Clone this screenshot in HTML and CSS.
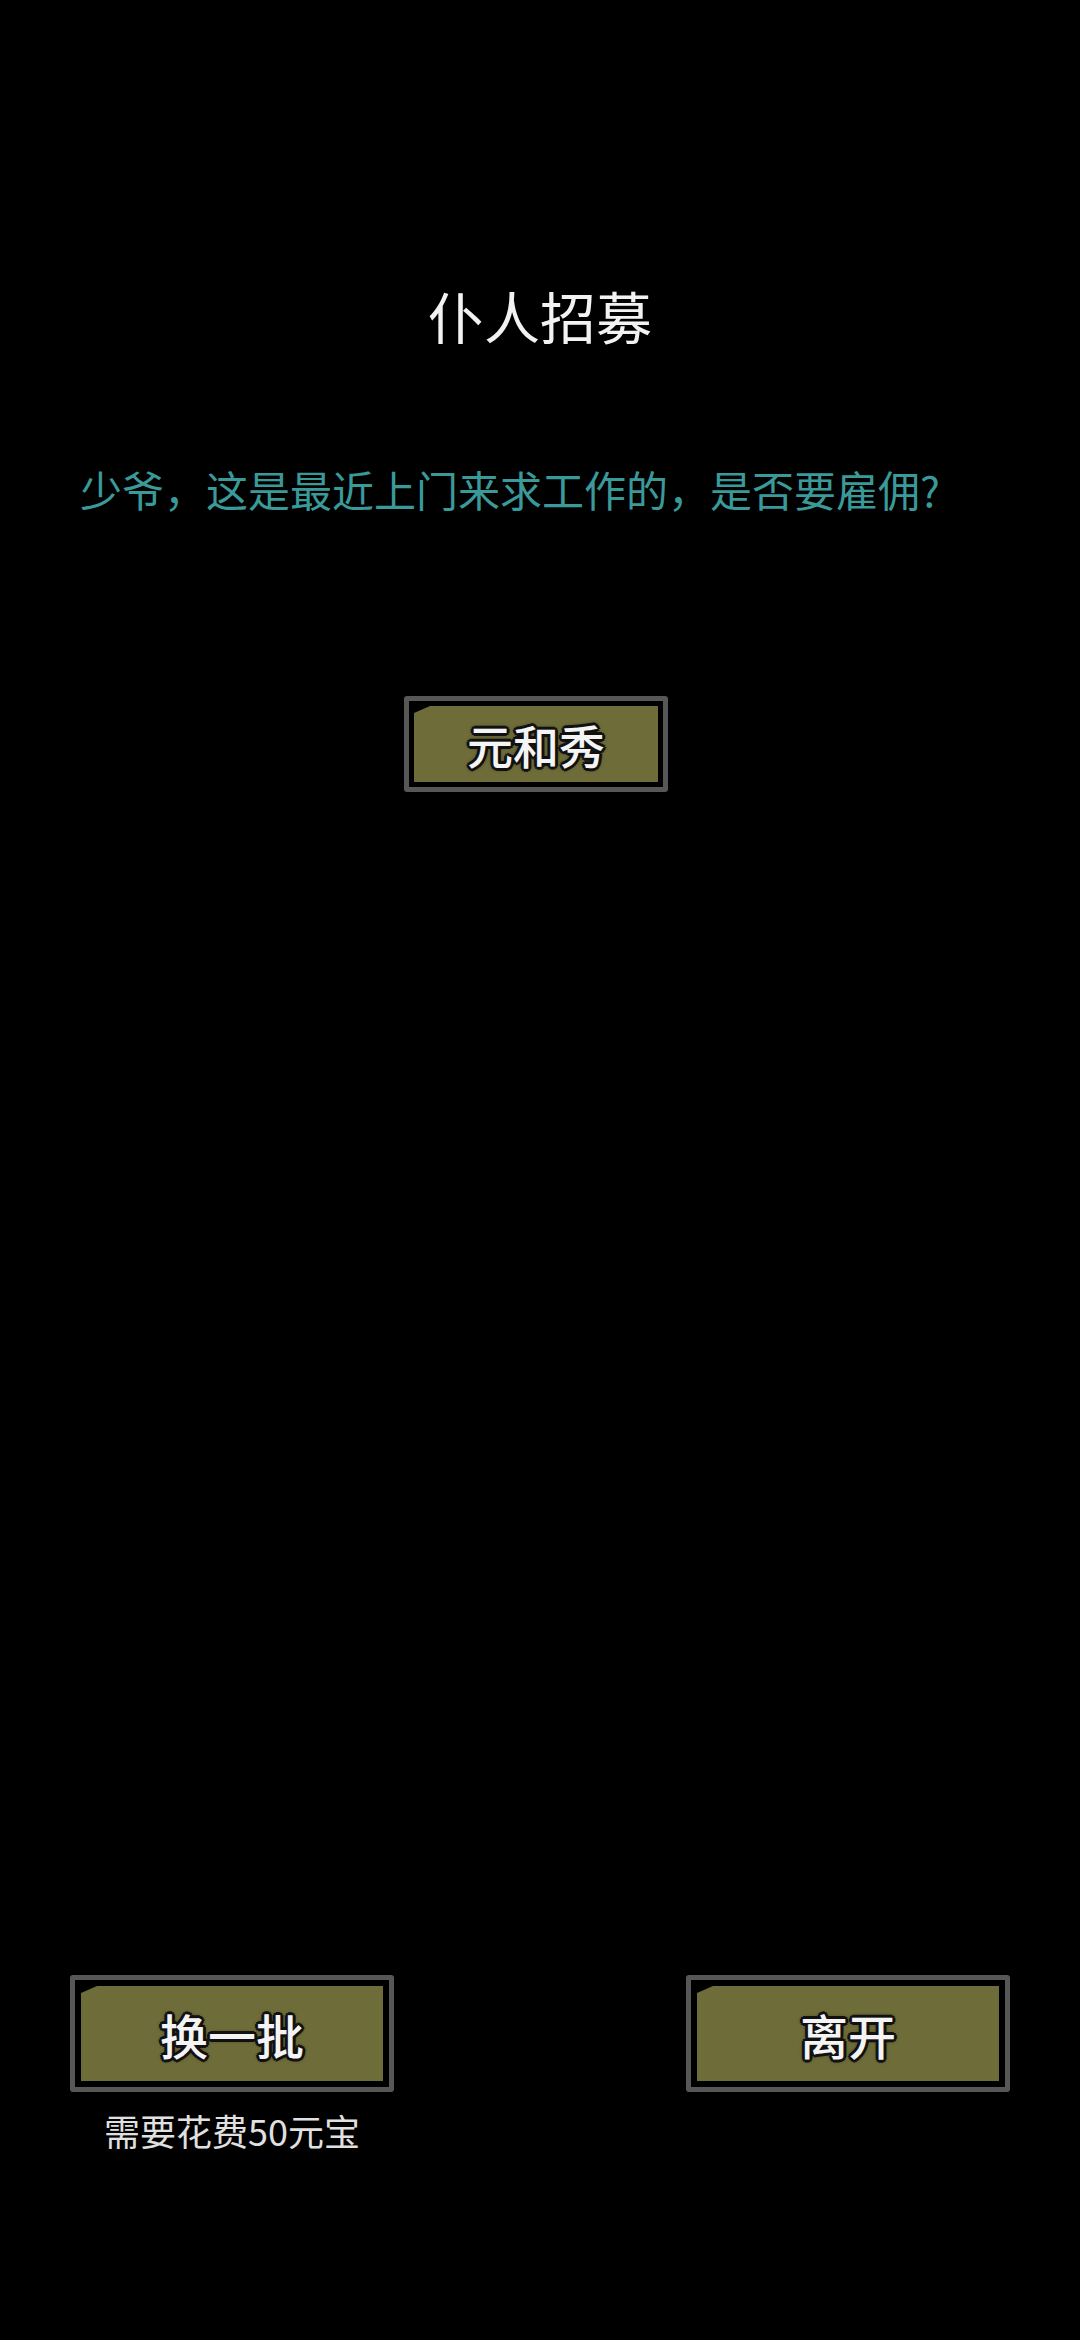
FILE: index.html
```html
<!DOCTYPE html>
<html lang="zh-CN">
<head>
<meta charset="utf-8">
<title>仆人招募</title>
<link rel="stylesheet" href="styles.css">
</head>
<body>
<div class="page">
  <h1 class="title">仆人招募</h1>
  <p class="prompt">少爷，这是最近上门来求工作的，是否要雇佣?</p>
  <div class="candidates">
    <div class="btn btn-small"><div class="btn-face"><span class="btn-label">元和秀</span></div></div>
  </div>
  <div class="spacer"></div>
  <div class="actions">
    <div class="action">
      <div class="btn btn-large"><div class="btn-face"><span class="btn-label">换一批</span></div></div>
      <div class="cost">需要花费50元宝</div>
    </div>
    <div class="action">
      <div class="btn btn-large"><div class="btn-face"><span class="btn-label">离开</span></div></div>
    </div>
  </div>
</div>
</body>
</html>
```

FILE: styles.css
```css
html, body {
  margin: 0;
  padding: 0;
  background: #000;
}
body {
  width: 1080px;
  height: 2340px;
  overflow: hidden;
  font-family: "Noto Sans CJK SC", "Noto Sans", sans-serif;
}
.page {
  display: flex;
  flex-direction: column;
  height: 2340px;
}
.title {
  margin: 287px 0 0 0;
  font-size: 56px;
  line-height: 56px;
  font-weight: 400;
  color: #f2f2f2;
  text-align: center;
}
.prompt {
  margin: 125px 0 0 80px;
  font-size: 42px;
  line-height: 42px;
  color: #3a9a9a;
}
.candidates {
  display: flex;
  padding-left: 404px;
  margin-top: 186px;
}
.btn {
  box-sizing: border-box;
  flex-shrink: 0;
  border: 5px solid #575757;
  border-radius: 3px;
  background: #000;
  padding: 5px;
  display: flex;
}
.btn-small {
  width: 264px;
  height: 96px;
}
.btn-large {
  width: 324px;
  height: 117px;
  padding: 6px;
}
.btn-face {
  flex: 1;
  background: #6e6c38;
  display: flex;
  align-items: center;
  justify-content: center;
  clip-path: polygon(16px 0, 100% 0, 100% 100%, 0 100%, 0 7px);
}
.btn-label {
  color: #f4f4f4;
  font-size: 46px;
  line-height: 1;
  font-weight: 500;
  text-shadow:
    3px 0 0 #111, -3px 0 0 #111, 0 3px 0 #111, 0 -3px 0 #111,
    2px 2px 0 #111, -2px 2px 0 #111, 2px -2px 0 #111, -2px -2px 0 #111,
    0 0 5px #000;
}
.btn-large .btn-label {
  font-size: 48px;
}
.spacer {
  flex: 1;
}
.actions {
  display: flex;
  justify-content: space-between;
  align-items: flex-start;
  padding: 0 70px;
  margin-bottom: 192px;
}
.action {
  display: flex;
  flex-direction: column;
  align-items: center;
}
.cost {
  margin-top: 20px;
  font-size: 36px;
  line-height: 36px;
  color: #e0e0e0;
}
```
